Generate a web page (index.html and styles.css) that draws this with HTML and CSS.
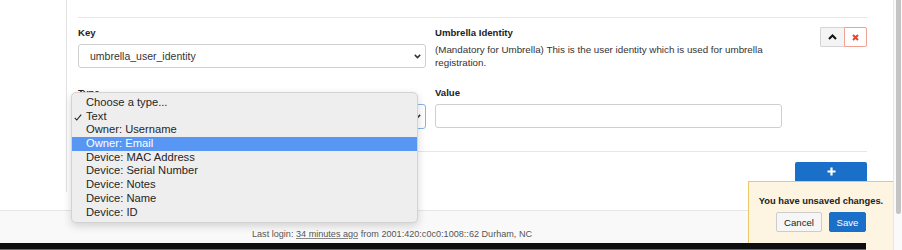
FILE: index.html
```html
<!DOCTYPE html>
<html>
<head>
<meta charset="utf-8">
<link rel="stylesheet" href="styles.css">
</head>
<body>
<div class="page">
  <div class="main">
    <div class="content">
      <div class="panel">
        <div class="rule"></div>
        <div class="row row-key">
          <div class="field">
            <div class="label">Key</div>
            <div class="select">
              <span>umbrella_user_identity</span>
              <svg class="chev" width="7" height="5" viewBox="0 0 7 5"><path d="M0.8 0.9 L3.5 3.6 L6.2 0.9" fill="none" stroke="#333" stroke-width="1.5"/></svg>
            </div>
          </div>
          <div class="desc">
            <div class="label">Umbrella Identity</div>
            <p class="help">(Mandatory for Umbrella) This is the user identity which is used for umbrella registration.</p>
          </div>
          <div class="tools">
            <button class="tool up"><svg width="9" height="6" viewBox="0 0 9 6"><path d="M1 5 L4.5 1.5 L8 5" fill="none" stroke="#111" stroke-width="2"/></svg></button>
            <button class="tool del"><svg width="7" height="7" viewBox="0 0 7 7"><path d="M1 1 L6 6 M6 1 L1 6" fill="none" stroke="#e8432b" stroke-width="2"/></svg></button>
          </div>
        </div>
        <div class="row row-type">
          <div class="field">
            <div class="label">Type</div>
            <div class="select focus">
              <span>Text</span>
              <svg class="chev" width="7" height="5" viewBox="0 0 7 5"><path d="M0.8 0.9 L3.5 3.6 L6.2 0.9" fill="none" stroke="#333" stroke-width="1.5"/></svg>
            </div>
          </div>
          <div class="field">
            <div class="label">Value</div>
            <div class="input"></div>
          </div>
        </div>
        <div class="rule rule2"></div>
        <div class="add-row">
          <button class="add"><svg width="9" height="9" viewBox="0 0 9 9"><path d="M4.5 0.5 V8.5 M0.5 4.5 H8.5" stroke="#fff" stroke-width="2.2"/></svg></button>
        </div>
      </div>
    </div>
    <footer class="footer">Last login: <u>34 minutes ago</u> from 2001:420:c0c0:1008::62 Durham, NC</footer>
  </div>
  <div class="scrollbar"><div class="thumb"></div></div>

  <ul class="menu">
    <li class="item">Choose a type...</li>
    <li class="item checked"><svg class="check" width="8" height="7" viewBox="0 0 8 7"><path d="M0.8 3.8 L2.8 6 L7.2 0.6" fill="none" stroke="#222" stroke-width="1.1"/></svg>Text</li>
    <li class="item">Owner: Username</li>
    <li class="item active">Owner: Email</li>
    <li class="item">Device: MAC Address</li>
    <li class="item">Device: Serial Number</li>
    <li class="item">Device: Notes</li>
    <li class="item">Device: Name</li>
    <li class="item">Device: ID</li>
  </ul>

  <div class="toast">
    <div class="toast-msg">You have unsaved changes.</div>
    <div class="toast-actions">
      <button class="btn cancel">Cancel</button>
      <button class="btn save">Save</button>
    </div>
  </div>

  <div class="blackbar"></div>
</div>
</body>
</html>
```

FILE: styles.css
```css
* { box-sizing: border-box; }
html, body { margin: 0; padding: 0; }
body {
  width: 902px;
  height: 250px;
  overflow: hidden;
  background: #fff;
  font-family: "Liberation Sans", Arial, sans-serif;
  color: #222;
}
.page {
  position: relative;
  display: flex;
  width: 902px;
  height: 250px;
}
.main {
  width: 893px;
  display: flex;
  flex-direction: column;
}
.content {
  height: 210px;
}
.panel {
  margin-left: 66px;
  height: 192px;
  border-left: 1px solid #e2e2e2;
  padding: 17px 26px 0 11px;
}
.rule {
  height: 1px;
  background: #e6e6e6;
}
.row {
  display: grid;
  column-gap: 9px;
}
.row-key {
  margin-top: 9px;
  grid-template-columns: 348px 360px 1fr;
}
.row-type {
  margin-top: 18px;
  grid-template-columns: 348px 347px;
}
.label {
  font-size: 9.6px;
  line-height: 12px;
  font-weight: bold;
  color: #222;
}
.field .label { margin-bottom: 5px; }
.select {
  height: 24px;
  border: 1px solid #cfcfcf;
  border-radius: 3px;
  background: #fff;
  display: flex;
  align-items: center;
  justify-content: space-between;
  padding: 0 4px 0 11px;
  font-size: 10.5px;
  color: #333;
}
.select.focus {
  height: 25px;
  border-color: #86b4e6;
}
.chev { display: block; }
.input {
  height: 24px;
  border: 1px solid #cfcfcf;
  border-radius: 3px;
  background: #fff;
}
.help {
  margin: 4px 0 0;
  font-size: 9.8px;
  line-height: 13px;
  color: #333;
}
.tools {
  justify-self: end;
  display: flex;
  height: 20px;
}
.tool {
  margin: 0;
  padding: 0;
  height: 20px;
  display: flex;
  align-items: center;
  justify-content: center;
  cursor: pointer;
}
.tool.up {
  width: 24px;
  background: #f4f4f4;
  border: 1px solid #d4d4d4;
  border-right: none;
  border-radius: 2px 0 0 2px;
}
.tool.del {
  width: 23px;
  background: #fff;
  border: 1px solid #f2a093;
  border-radius: 0 2px 2px 0;
}
.rule2 { margin-top: 22px; }
.add-row {
  display: flex;
  justify-content: flex-end;
  margin-top: 10px;
}
.add {
  width: 72px;
  height: 22px;
  margin: 0;
  padding: 0;
  border: none;
  border-radius: 2px;
  background: #1a6fc8;
  display: flex;
  align-items: flex-start;
  justify-content: center;
  padding-top: 5px;
}
.footer {
  height: 40px;
  border-top: 1px solid #e6e6e6;
  background: #f9f9f9;
  padding: 17px 0 0 252px;
  font-size: 9.1px;
  line-height: 12px;
  color: #555;
}
.footer u { text-decoration-color: #888; }
.scrollbar {
  width: 9px;
  height: 250px;
  border-left: 1px solid #e6e6e6;
  background: #fafafa;
  padding-left: 2px;
}
.thumb {
  width: 5px;
  height: 214px;
  border-radius: 0 0 3px 3px;
  background: #c4c4c4;
}
.menu {
  position: absolute;
  left: 71px;
  top: 92px;
  width: 347px;
  margin: 0;
  padding: 3px 0;
  list-style: none;
  background: #eeeeee;
  border: 1px solid #d3d3d3;
  border-radius: 5px;
  box-shadow: 0 3px 8px rgba(0, 0, 0, 0.16);
}
.item {
  position: relative;
  height: 13.7px;
  line-height: 13.7px;
  padding-left: 14px;
  font-size: 11.2px;
  color: #262626;
}
.item.active {
  background: #5797f3;
  color: #fff;
}
.check {
  position: absolute;
  left: 2px;
  top: 4px;
}
.toast {
  position: absolute;
  left: 748px;
  top: 181px;
  width: 145px;
  height: 69px;
  background: #fdf4e1;
  border-top: 1px solid #e8cb66;
  border-left: 1px solid #e8cb66;
  display: flex;
  flex-direction: column;
  align-items: center;
  padding-top: 13px;
}
.toast-msg {
  font-size: 9.35px;
  line-height: 12px;
  font-weight: bold;
  color: #222;
}
.toast-actions {
  display: flex;
  gap: 7px;
  margin-top: 5px;
}
.btn {
  height: 20px;
  margin: 0;
  padding: 0;
  font-family: "Liberation Sans", Arial, sans-serif;
  font-size: 9.6px;
  border-radius: 2px;
}
.cancel {
  width: 46px;
  background: #f6f6f6;
  border: 1px solid #cccccc;
  color: #222;
}
.save {
  width: 37px;
  background: #1a6fc8;
  border: 1px solid #1a6fc8;
  color: #fff;
}
.blackbar {
  position: absolute;
  left: 0;
  top: 243px;
  width: 866px;
  height: 7px;
  background: #0e0e0e;
  border-bottom: 1px solid #6a6a6a;
}
```
